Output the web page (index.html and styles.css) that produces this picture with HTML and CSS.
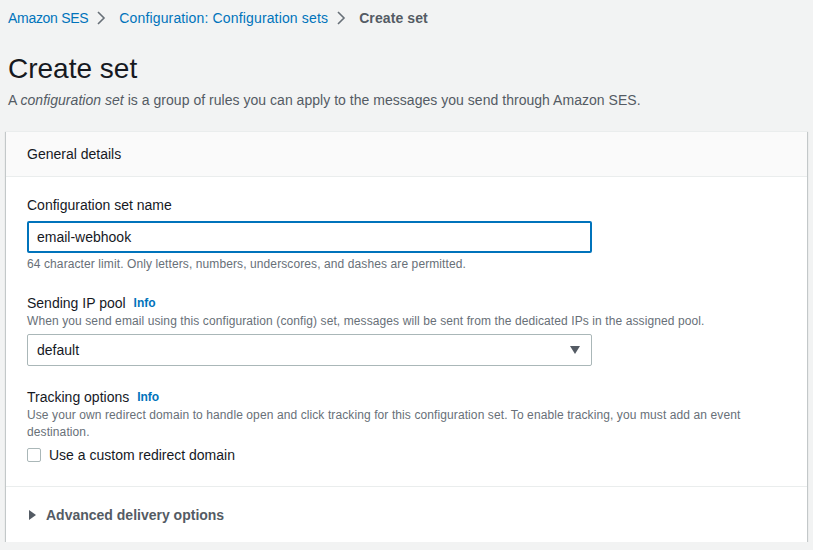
FILE: index.html
```html
<!DOCTYPE html>
<html lang="en">
<head>
<meta charset="utf-8">
<title>Create set</title>
<link rel="stylesheet" href="styles.css">
</head>
<body>
<div class="page">
  <nav class="breadcrumbs">
    <a class="crumb-link first" href="#">Amazon SES</a>
    <svg class="chev" viewBox="0 0 10 14" width="10" height="14"><polyline points="2,1 8,7 2,13" fill="none" stroke="#687078" stroke-width="1.6"/></svg>
    <a class="crumb-link" href="#">Configuration: Configuration sets</a>
    <svg class="chev" viewBox="0 0 10 14" width="10" height="14"><polyline points="2,1 8,7 2,13" fill="none" stroke="#687078" stroke-width="1.6"/></svg>
    <span class="crumb-current">Create set</span>
  </nav>
  <h1 class="title">Create set</h1>
  <p class="intro">A <em>configuration set</em> is a group of rules you can apply to the messages you send through Amazon SES.</p>

  <section class="card">
    <div class="card-header">General details</div>
    <div class="card-body">
      <div class="field">
        <label class="label">Configuration set name</label>
        <div class="input focused">email-webhook</div>
        <div class="hint">64 character limit. Only letters, numbers, underscores, and dashes are permitted.</div>
      </div>
      <div class="field">
        <div class="label">Sending IP pool <a class="info" href="#">Info</a></div>
        <div class="desc">When you send email using this configuration (config) set, messages will be sent from the dedicated IPs in the assigned pool.</div>
        <div class="input select">
          <span>default</span>
          <svg class="caret" viewBox="0 0 10 8" width="10" height="8"><polygon points="0,0 10,0 5,8" fill="#545b64"/></svg>
        </div>
      </div>
      <div class="field">
        <div class="label">Tracking options <a class="info" href="#">Info</a></div>
        <div class="desc">Use your own redirect domain to handle open and click tracking for this configuration set. To enable tracking, you must add an event destination.</div>
        <label class="check-row"><span class="checkbox"></span>Use a custom redirect domain</label>
      </div>
    </div>
    <div class="card-footer">
      <svg class="tri" viewBox="0 0 7 10" width="7" height="10"><polygon points="0,0 7,5 0,10" fill="#545b64"/></svg>
      <span class="adv">Advanced delivery options</span>
    </div>
  </section>
</div>
</body>
</html>
```

FILE: styles.css
```css
* { box-sizing: border-box; }
html, body { margin: 0; padding: 0; }
body {
  background: #f2f3f3;
  font-family: "Liberation Sans", Arial, sans-serif;
  color: #16191f;
  font-size: 14px;
}
.page { padding: 7px 6px 0 6px; }
.breadcrumbs {
  display: flex;
  align-items: center;
  height: 22px;
  padding-left: 2px;
}
.crumb-link { color: #0073bb; text-decoration: none; font-size: 14px; letter-spacing: 0.15px; }
.crumb-link.first { letter-spacing: -0.3px; }
.crumb-current { color: #545b64; font-weight: bold; font-size: 14px; letter-spacing: 0.1px; }
.chev { width: 10px; height: 14px; margin: 0 13px 0 8px; }
.title {
  margin: 22px 0 0 2px;
  font-size: 28px;
  line-height: 36px;
  font-weight: normal;
  color: #16191f;
}
.intro {
  margin: 3px 0 0 2px;
  font-size: 14px;
  line-height: 20px;
  color: #545b64;
  letter-spacing: 0.03px;
}
.card {
  margin-top: 21px;
  background: #fff;
  border-top: 1px solid #eaeded;
  box-shadow: 0 1px 1px 0 rgba(0,28,36,.3), 1px 1px 1px 0 rgba(0,28,36,.15), -1px 1px 1px 0 rgba(0,28,36,.15);
}
.card-header {
  background: #fafafa;
  border-bottom: 1px solid #eaeded;
  height: 45px;
  display: flex;
  align-items: center;
  padding-left: 21px;
  font-size: 14px;
  color: #16191f;
}
.card-body {
  padding: 18px 21px 21px 21px;
  display: flex;
  flex-direction: column;
  gap: 21px;
  border-bottom: 1px solid #eaeded;
}
.field { display: flex; flex-direction: column; }
.label {
  display: flex;
  align-items: center;
  height: 20px;
  font-size: 14px;
  line-height: 20px;
  color: #16191f;
}
.info {
  margin-left: 8px;
  color: #0073bb;
  font-size: 12px;
  line-height: 20px;
  font-weight: bold;
  text-decoration: none;
}
.input {
  width: 565px;
  height: 32px;
  border: 1px solid #aab7b8;
  border-radius: 2px;
  display: flex;
  align-items: center;
  padding-left: 9px;
  font-size: 14px;
  color: #16191f;
}
.input.focused {
  margin-top: 6px;
  border: 2px solid #0073bb;
  padding-left: 8px;
}
.select {
  margin-top: 4px;
  justify-content: space-between;
  padding-right: 11px;
}
.caret { width: 10px; height: 8px; }
.hint {
  margin-top: 3px;
  font-size: 12px;
  line-height: 16px;
  color: #687078;
  letter-spacing: 0.1px;
}
.desc {
  font-size: 12px;
  line-height: 17px;
  color: #687078;
  letter-spacing: 0.1px;
}
.check-row {
  margin-top: 4px;
  display: flex;
  align-items: center;
  gap: 8px;
  font-size: 14px;
  line-height: 20px;
  color: #16191f;
}
.checkbox {
  width: 14px;
  height: 14px;
  border: 1px solid #aab7b8;
  border-radius: 2px;
  background: #fff;
}
.card-footer {
  display: flex;
  align-items: center;
  padding: 0 21px 0 23px;
  gap: 10px;
  height: 55px;
}
.tri { width: 7px; height: 10px; }
.adv {
  font-size: 14px;
  font-weight: bold;
  color: #545b64;
}
```
